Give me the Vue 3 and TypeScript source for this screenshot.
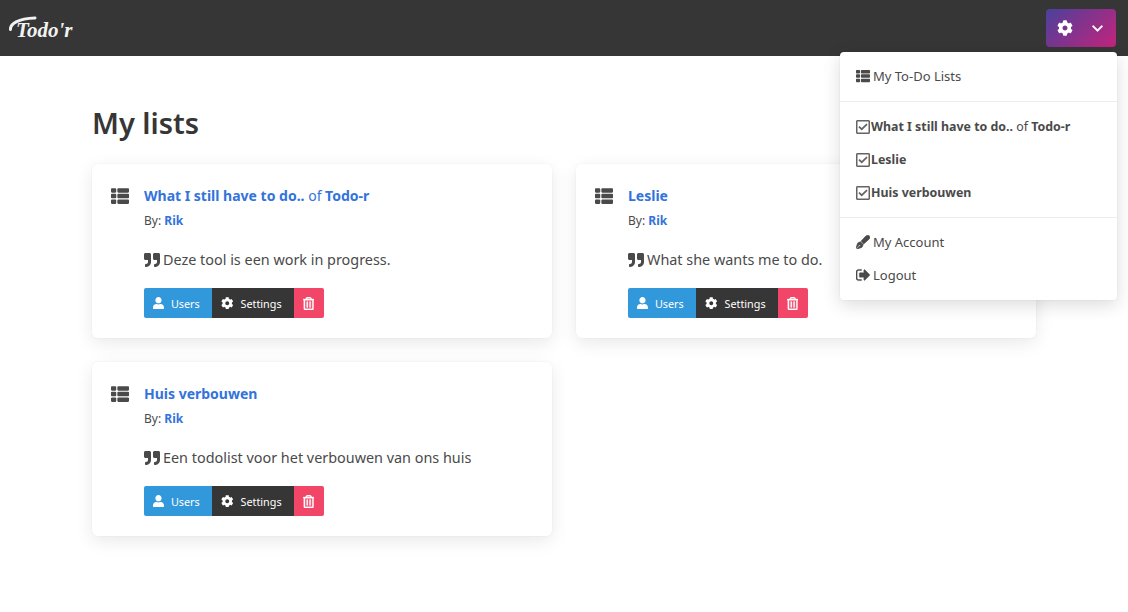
<script setup lang="ts">
interface TodoList {
  name: string;
  project?: string;
  owner: string;
  description: string;
}

const lists: TodoList[] = [
  { name: 'What I still have to do..', project: 'Todo-r', owner: 'Rik', description: 'Deze tool is een work in progress.' },
  { name: 'Leslie', owner: 'Rik', description: 'What she wants me to do.' },
  { name: 'Huis verbouwen', owner: 'Rik', description: 'Een todolist voor het verbouwen van ons huis' }
];

const icons = {
  cog: 'M487.4 315.7l-42.6-24.6c4.3-23.2 4.3-47 0-70.2l42.6-24.6c4.9-2.8 7.1-8.6 5.5-14-11.1-35.6-30-67.8-54.7-94.6-3.8-4.1-10-5.1-14.8-2.3L380.8 110c-17.9-15.4-38.5-27.3-60.8-35.1V25.8c0-5.6-3.9-10.5-9.4-11.7-36.7-8.2-74.3-7.8-109.2 0-5.5 1.2-9.4 6.1-9.4 11.7V75c-22.2 7.9-42.8 19.8-60.8 35.1L88.7 85.5c-4.9-2.8-11-1.9-14.8 2.3-24.7 26.7-43.6 58.9-54.7 94.6-1.7 5.4.6 11.2 5.5 14L67.3 221c-4.3 23.2-4.3 47 0 70.2l-42.6 24.6c-4.9 2.8-7.1 8.6-5.5 14 11.1 35.6 30 67.8 54.7 94.6 3.8 4.1 10 5.1 14.8 2.3l42.6-24.6c17.9 15.4 38.5 27.3 60.8 35.1v49.2c0 5.6 3.9 10.5 9.4 11.7 36.7 8.2 74.3 7.8 109.2 0 5.5-1.2 9.4-6.1 9.4-11.7v-49.2c22.2-7.9 42.8-19.8 60.8-35.1l42.6 24.6c4.9 2.8 11 1.9 14.8-2.3 24.7-26.7 43.6-58.9 54.7-94.6 1.5-5.5-.7-11.3-5.6-14.1zM256 336c-44.1 0-80-35.9-80-80s35.9-80 80-80 80 35.9 80 80-35.9 80-80 80z',
  chevron: 'M207.029 381.476L12.686 187.132c-9.373-9.373-9.373-24.569 0-33.941l22.667-22.667c9.357-9.357 24.522-9.375 33.901-.04L224 284.505l154.745-154.021c9.379-9.335 24.544-9.317 33.901.04l22.667 22.667c9.373 9.373 9.373 24.569 0 33.941L240.971 381.476c-9.373 9.372-24.569 9.372-33.942 0z',
  list: 'M149.333 216v80c0 13.255-10.745 24-24 24H24c-13.255 0-24-10.745-24-24v-80c0-13.255 10.745-24 24-24h101.333c13.255 0 24 10.745 24 24zM0 376v80c0 13.255 10.745 24 24 24h101.333c13.255 0 24-10.745 24-24v-80c0-13.255-10.745-24-24-24H24c-13.255 0-24 10.745-24 24zM125.333 32H24C10.745 32 0 42.745 0 56v80c0 13.255 10.745 24 24 24h101.333c13.255 0 24-10.745 24-24V56c0-13.255-10.745-24-24-24zm80 448H488c13.255 0 24-10.745 24-24v-80c0-13.255-10.745-24-24-24H205.333c-13.255 0-24 10.745-24 24v80c0 13.255 10.745 24 24 24zm-24-424v80c0 13.255 10.745 24 24 24H488c13.255 0 24-10.745 24-24V56c0-13.255-10.745-24-24-24H205.333c-13.255 0-24 10.745-24 24zm24 264H488c13.255 0 24-10.745 24-24v-80c0-13.255-10.745-24-24-24H205.333c-13.255 0-24 10.745-24 24v80c0 13.255 10.745 24 24 24z',
  quote: 'M464 32H336c-26.5 0-48 21.5-48 48v128c0 26.5 21.5 48 48 48h80v64c0 35.3-28.7 64-64 64h-8c-13.3 0-24 10.7-24 24v48c0 13.3 10.7 24 24 24h8c88.4 0 160-71.6 160-160V80c0-26.5-21.5-48-48-48zm-288 0H48C21.5 32 0 53.5 0 80v128c0 26.5 21.5 48 48 48h80v64c0 35.3-28.7 64-64 64h-8c-13.3 0-24 10.7-24 24v48c0 13.3 10.7 24 24 24h8c88.4 0 160-71.6 160-160V80c0-26.5-21.5-48-48-48z',
  user: 'M224 256c70.7 0 128-57.3 128-128S294.7 0 224 0 96 57.3 96 128s57.3 128 128 128zm89.6 32h-16.7c-22.2 10.2-46.9 16-72.9 16s-50.6-5.8-72.9-16h-16.7C60.2 288 0 348.2 0 422.4V464c0 26.5 21.5 48 48 48h352c26.5 0 48-21.5 48-48v-41.6c0-74.2-60.2-134.4-134.4-134.4z',
  trash: 'M268 416h24a12 12 0 0 0 12-12V188a12 12 0 0 0-12-12h-24a12 12 0 0 0-12 12v216a12 12 0 0 0 12 12zM432 80h-82.41l-34-56.7A48 48 0 0 0 274.41 0H173.59a48 48 0 0 0-41.16 23.3L98.41 80H16A16 16 0 0 0 0 96v16a16 16 0 0 0 16 16h16v336a48 48 0 0 0 48 48h288a48 48 0 0 0 48-48V128h16a16 16 0 0 0 16-16V96a16 16 0 0 0-16-16zM171.84 50.91A6 6 0 0 1 177 48h94a6 6 0 0 1 5.15 2.91L293.61 80H154.39zM368 464H80V128h288zm-212-48h24a12 12 0 0 0 12-12V188a12 12 0 0 0-12-12h-24a12 12 0 0 0-12 12v216a12 12 0 0 0 12 12z',
  check: 'M400 32H48C21.49 32 0 53.49 0 80v352c0 26.51 21.49 48 48 48h352c26.51 0 48-21.49 48-48V80c0-26.51-21.49-48-48-48zm0 400H48V80h352v352zm-35.864-241.724L191.547 361.48c-4.705 4.667-12.303 4.637-16.97-.068l-90.781-91.516c-4.667-4.705-4.637-12.303.069-16.971l22.719-22.536c4.705-4.667 12.303-4.637 16.97.069l59.792 60.277 141.352-140.216c4.705-4.667 12.303-4.637 16.97.068l22.536 22.718c4.667 4.706 4.637 12.304-.068 16.971z',
  pen: 'M79.18 282.94a32 32 0 0 0-20.24 20.24L0 480l4.69 4.69 92.89-92.89c-.66-2.56-1.57-5.03-1.57-7.8 0-17.67 14.33-32 32-32s32 14.33 32 32-14.33 32-32 32c-2.77 0-5.24-.91-7.8-1.57l-92.89 92.89L32 512l176.82-58.94a32 32 0 0 0 20.24-20.24l33.07-84.07-98.88-98.88-84.07 33.07zM369.25 28.32L186.14 227.81l97.85 97.85 199.49-183.11c34.04-30.15 36.64-79.48 6.29-109.83-30.35-30.35-79.68-27.75-110.52-4.4z',
  signout: 'M704 1440q0 4 1 20t.5 26.5-3 23.5-10 19.5-20.5 6.5h-320q-119 0-203.5-84.5t-84.5-203.5v-704q0-119 84.5-203.5t203.5-84.5h320q13 0 22.5 9.5t9.5 22.5q0 4 1 20t.5 26.5-3 23.5-10 19.5-20.5 6.5h-320q-66 0-113 47t-47 113v704q0 66 47 113t113 47h312l11.5 1 11.5 3 8 5.5 7 9 2 13.5zm928-544q0 26-19 45l-544 544q-19 19-45 19t-45-19-19-45v-288h-448q-26 0-45-19t-19-45v-384q0-26 19-45t45-19h448v-288q0-26 19-45t45-19 45 19l544 544q19 19 19 45z'
};
</script>

<template>
  <div class="page">
    <header class="navbar">
      <a class="logo">
        <svg width="66" height="28" viewBox="0 0 66 28">
          <path d="M1.5 14.500C1 9 9 3.500 26 3" fill="none" stroke="#f2f2f2" stroke-width="3" stroke-linecap="round" />
          <text x="7" y="22" class="logo-text">Todo'r</text>
        </svg>
      </a>
      <button class="menu-btn">
        <svg class="btn-cog" viewBox="0 0 512 512"><path :d="icons.cog" /></svg>
        <svg class="btn-chevron" viewBox="0 0 448 512"><path :d="icons.chevron" /></svg>
      </button>
    </header>

    <main class="content">
      <h1 class="title">My lists</h1>
      <div class="grid">
        <article v-for="list in lists" :key="list.name" class="card">
          <svg class="card-icon" viewBox="0 0 512 512"><path :d="icons.list" /></svg>
          <div class="card-body">
            <h2 class="card-title">
              <a><b>{{ list.name }}</b></a>
              <template v-if="list.project">
                <span class="of">&nbsp;of&nbsp;</span><a><b>{{ list.project }}</b></a>
              </template>
            </h2>
            <p class="by">By: <a><b>{{ list.owner }}</b></a></p>
            <p class="desc">
              <svg class="quote" viewBox="0 0 512 512"><path :d="icons.quote" /></svg>
              {{ list.description }}
            </p>
            <div class="actions">
              <button class="btn btn-users">
                <svg viewBox="0 0 448 512"><path :d="icons.user" /></svg>
                Users
              </button>
              <button class="btn btn-settings">
                <svg viewBox="0 0 512 512"><path :d="icons.cog" /></svg>
                Settings
              </button>
              <button class="btn btn-delete">
                <svg class="trash" viewBox="0 0 448 512"><path :d="icons.trash" /></svg>
              </button>
            </div>
          </div>
        </article>
      </div>
    </main>

    <nav class="dropdown">
      <a class="item">
        <svg class="item-icon" viewBox="0 0 512 512"><path :d="icons.list" /></svg>
        My To-Do Lists
      </a>
      <hr />
      <a v-for="list in lists" :key="list.name" class="item item-list">
        <svg class="check" viewBox="0 0 448 512"><path :d="icons.check" /></svg>
        <span><b>{{ list.name }}</b><template v-if="list.project"> of <b>{{ list.project }}</b></template></span>
      </a>
      <hr />
      <a class="item">
        <svg class="item-icon pen" viewBox="0 0 512 512"><path :d="icons.pen" /></svg>
        My Account
      </a>
      <a class="item">
        <svg class="item-icon signout" viewBox="64 192 1600 1408"><path :d="icons.signout" /></svg>
        Logout
      </a>
    </nav>
  </div>
</template>

<style>
html,
body {
  margin: 0;
  background: #fff;
}
</style>

<style scoped>
.page {
  position: relative;
  min-height: 612px;
  font-family: "Noto Sans", "Open Sans", sans-serif;
  color: #4a4a4a;
  font-size: 14px;
}

svg {
  fill: currentColor;
  flex: none;
}

/* Navbar */
.navbar {
  height: 56px;
  background: #363636;
  display: flex;
  align-items: center;
  justify-content: space-between;
  padding: 0 12px 0 9px;
  box-sizing: border-box;
}

.logo {
  display: flex;
  margin-top: 2px;
}

.logo-text {
  font-family: "Liberation Serif", serif;
  font-style: italic;
  font-weight: 700;
  font-size: 21px;
  fill: #f2f2f2;
}

.menu-btn {
  width: 70px;
  height: 38px;
  border: 0;
  border-radius: 4px;
  padding: 0;
  color: #fff;
  background: linear-gradient(135deg, #4a419b, #c4237c);
  display: flex;
  align-items: center;
}

.btn-cog {
  width: 16px;
  height: 16px;
  margin-left: 11px;
}

.btn-chevron {
  width: 11px;
  height: 13px;
  margin-left: 19px;
}

/* Lists */
.content {
  padding: 47px 92px 0;
}

.title {
  margin: 0 0 21px;
  font-size: 29px;
  line-height: 40px;
  font-weight: 600;
  color: #363636;
}

.grid {
  display: grid;
  grid-template-columns: 460px 460px;
  gap: 24px;
}

.card {
  height: 174px;
  box-sizing: border-box;
  background: #fff;
  border-radius: 6px;
  box-shadow: 0 5px 18px rgba(10, 10, 10, 0.09), 0 0 0 1px rgba(10, 10, 10, 0.015);
  padding: 20px 20px 20px 19px;
  display: flex;
  gap: 15px;
}

.card-icon {
  width: 18px;
  height: 18px;
  margin-top: 3px;
  color: #4a4a4a;
}

.card-body {
  flex: 1;
}

.card-title {
  margin: 0;
  font-size: 14px;
  line-height: 24px;
  font-weight: 400;
  color: #3273dc;
  display: flex;
}

.card-title b,
.by b {
  font-weight: 700;
  color: #3273dc;
}

.by {
  margin: 1px 0 0;
  font-size: 12px;
  line-height: 24px;
}

.desc {
  margin: 15px 0 0;
  font-size: 14.4px;
  line-height: 24px;
  display: flex;
  align-items: center;
  gap: 3px;
}

.quote {
  width: 16px;
  height: 16px;
}

.actions {
  display: flex;
  margin-top: 16px;
}

.btn {
  height: 30px;
  border: 0;
  padding: 0 0 0 9px;
  font-family: inherit;
  font-size: 10.8px;
  color: #fff;
  display: flex;
  align-items: center;
  gap: 7px;
}

.btn svg {
  height: 12.5px;
}

.btn-users {
  width: 68px;
  background: #3298dc;
  border-radius: 2px 0 0 2px;
}

.btn-settings {
  width: 82px;
  background: #363636;
}

.btn-delete {
  width: 30px;
  background: #f14668;
  border-radius: 0 2px 2px 0;
}

.btn .trash {
  height: 13px;
  stroke: currentColor;
  stroke-width: 14;
}

/* Dropdown */
.dropdown {
  position: absolute;
  top: 52px;
  left: 840px;
  width: 277px;
  height: 248px;
  box-sizing: border-box;
  background: #fff;
  border-radius: 4px;
  box-shadow: 0 5px 18px rgba(10, 10, 10, 0.14), 0 0 0 1px rgba(10, 10, 10, 0.02);
  padding: 8px 0;
  font-size: 13px;
}

.dropdown hr {
  margin: 8px 0;
  border: 0;
  height: 1px;
  background: #ededed;
}

.item {
  display: flex;
  align-items: center;
  gap: 3px;
  height: 33px;
  box-sizing: border-box;
  padding: 0 16px 2px;
}

.item-icon {
  width: 14px;
  height: 14px;
}

.pen {
  stroke: currentColor;
  stroke-width: 26;
}

.signout {
  stroke: currentColor;
  stroke-width: 50;
}

.item-list {
  gap: 1px;
  font-size: 12.4px;
  padding-bottom: 0;
}

.check {
  width: 14px;
  height: 16px;
  opacity: 0.85;
}

.item-list b {
  font-weight: 700;
}
</style>
